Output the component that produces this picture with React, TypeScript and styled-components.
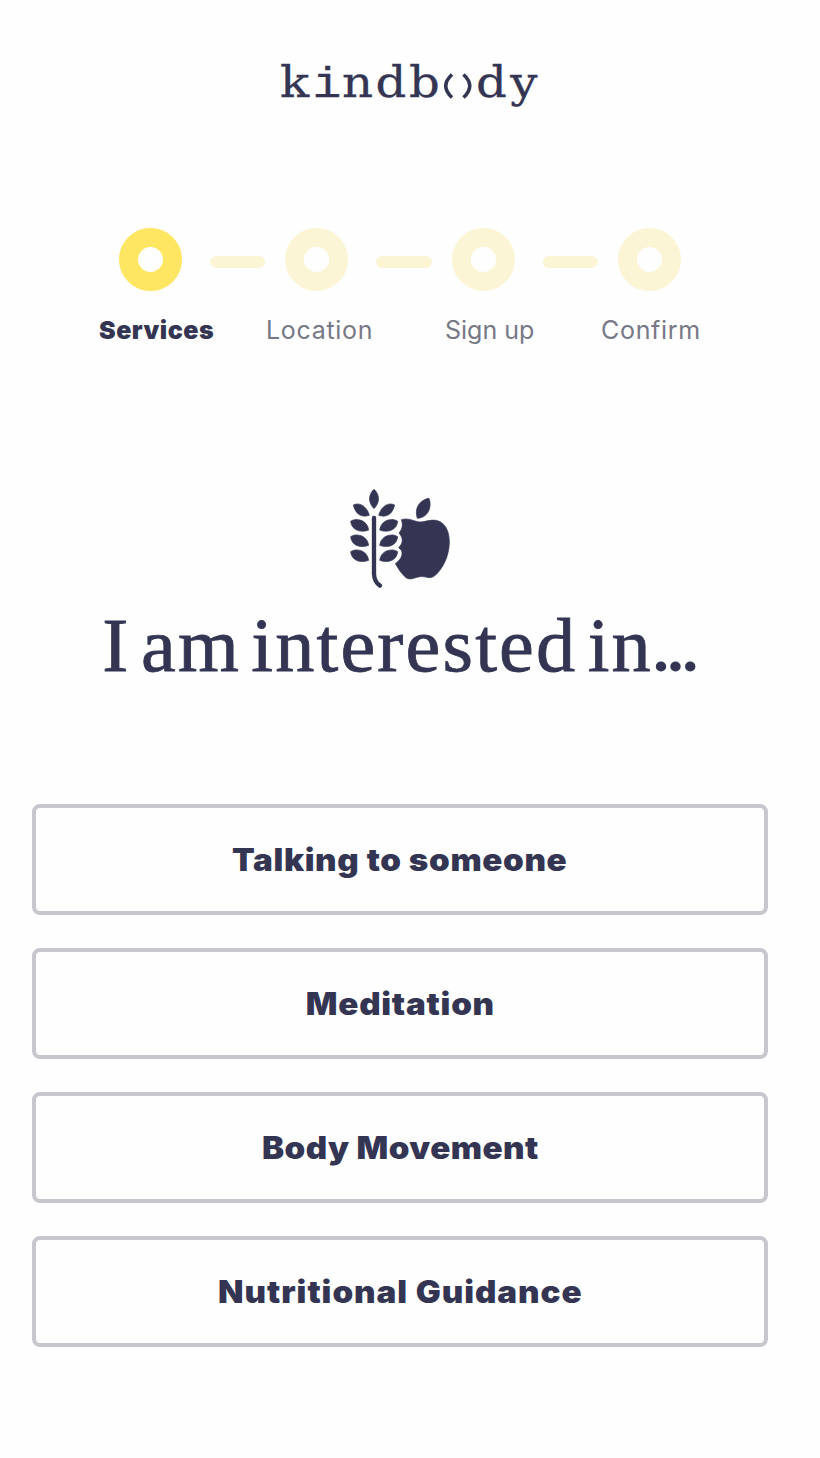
import React from "react";
import styled, { createGlobalStyle } from "styled-components";

const ink = "#333553";

const GlobalStyle = createGlobalStyle`
  * { box-sizing: border-box; }
  body { margin: 0; background: #fefefe; }
`;

const Page = styled.main`
  width: 820px;
  height: 1458px;
  overflow: hidden;
  color: ${ink};
  font-family: Inter, "Liberation Sans", sans-serif;
`;

const Header = styled.header`
  display: flex;
  height: 228px;
  padding: 50px 0 0 270px;
`;

const Content = styled.div`
  display: flex;
  flex-direction: column;
  width: 800px;
`;

const Track = styled.div`
  display: flex;
  align-items: center;
  gap: 28px;
  height: 63px;
  padding-left: 119px;
`;

const Ring = styled.span<{ $active?: boolean }>`
  flex: none;
  width: 63px;
  height: 63px;
  border: 19.5px solid ${(p) => (p.$active ? "#ffe662" : "#fcf5d5")};
  border-radius: 50%;
`;

const Dash = styled.span`
  flex: none;
  width: 55.4px;
  height: 12px;
  margin: 5px -8px 0 0;
  border-radius: 6px;
  background: #fcf5d5;
`;

const Labels = styled.div`
  display: grid;
  grid-template-columns: 167px 179px 156px 1fr;
  padding: 23px 0 0 99px;
  height: 198px;
`;

const Label = styled.span<{ $active?: boolean; $track: number }>`
  font-size: 25px;
  line-height: 32px;
  white-space: nowrap;
  font-weight: ${(p) => (p.$active ? 900 : 400)};
  color: ${(p) => (p.$active ? ink : "#777886")};
  letter-spacing: ${(p) => p.$track}px;
`;

const Hero = styled.section`
  display: flex;
  flex-direction: column;
  align-items: center;
  height: 315px;
  & > svg { margin-top: -9px; flex: none; }
`;

const Title = styled.h1`
  margin: 5px 0 0;
  font: 400 76px/90px "Liberation Serif", serif;
  letter-spacing: 2.1px;
  word-spacing: -11px;
  white-space: nowrap;
  transform: scaleX(1.03);
  -webkit-text-stroke: 0.8px ${ink};
`;

const Dots = styled.span`
  font-size: 62px;
  font-weight: 700;
  letter-spacing: -1.3px;
  -webkit-text-stroke: 0;
`;

const Options = styled.div`
  display: flex;
  flex-direction: column;
  gap: 33px;
  padding: 0 32px;
`;

const Option = styled.button`
  height: 111px;
  border: 4px solid #c6c6cf;
  border-radius: 8px;
  background: transparent;
  color: ${ink};
  font: 900 31px/40px Inter, "Liberation Sans", sans-serif;
`;

const OptionText = styled.span<{ $track: number }>`
  display: inline-block;
  letter-spacing: ${(p) => p.$track}px;
  transform: scaleX(1.07);
`;

const Logo = () => (
  <svg width="280" height="70" viewBox="0 0 280 70" fill={ink} fontFamily='"DejaVu Serif", serif' fontSize="43">
    <g transform="scale(1.12 1)" stroke={ink} strokeWidth="0.3">
      <text y="47.500" x="8.900 38 64.300 94.200 124.100">k<tspan fontFamily='"Liberation Mono", monospace'>i</tspan>ndb</text>
      <text y="47.500" x="183.900 214.400">dy</text>
    </g>
    <path d="M182 24.500Q169.500 36 182 47.500M193.500 24.500Q206 36 193.500 47.500" fill="none" stroke={ink} strokeWidth="3.600" />
  </svg>
);

const Harvest = () => (
  <svg width="120" height="115" viewBox="0 0 360 345" fill={ink} stroke={ink} strokeWidth="2" strokeLinejoin="round">
    <path d="M102 28C84 44 84 68 102 86C120 68 120 44 102 28Z" />
    <path d="M40 75C56 66 80 76 88 106C64 114 46 102 40 75Z" />
    <path d="M164 75C148 66 124 76 116 106C140 114 158 102 164 75Z" />
    <path d="M32 124C46 113 82 118 86 150C62 160 34 150 32 124Z" />
    <path d="M32 170C46 159 82 164 86 196C62 206 34 196 32 170Z" />
    <path d="M32 215C46 204 82 209 86 241C62 251 34 241 32 215Z" />
    <path d="M173 124C159 113 123 118 119 150C143 160 171 150 173 124Z" />
    <path d="M173 170C159 159 123 164 119 196C143 206 171 196 173 170Z" />
    <path d="M173 215C159 204 123 209 119 241C143 251 171 241 173 215Z" />
    <path d="M102 114V282Q103 306 120 317" fill="none" strokeWidth="13" strokeLinecap="round" />
    <path d="M264 55C238 62 222 86 232 115C260 114 277 87 268 57Q267 54 264 55Z" />
    <path d="M184 119C208 112 222 125 241 126C260 125 273 117 293 122C318 130 329 157 328 191C326 230 309 265 286 286C270 300 259 288 241 290C222 292 213 302 198 293C184 281 175 266 166 251C182 239 190 226 184 211L176 203C188 190 192 177 177 159C188 145 189 134 184 119Z" />
  </svg>
);

const steps = [
  { name: "Services", track: 0.5 },
  { name: "Location", track: 0.7 },
  { name: "Sign up", track: 0 },
  { name: "Confirm", track: 0.7 },
];

const options = [
  { name: "Talking to someone", track: 0.6 },
  { name: "Meditation", track: 0.7 },
  { name: "Body Movement", track: 0.4 },
  { name: "Nutritional Guidance", track: 0.9 },
];

export default function App() {
  return (
    <Page>
      <GlobalStyle />
      <Header><Logo /></Header>
      <Content>
        <Track>
          {steps.map((s, i) => (
            <React.Fragment key={s.name}>
              {i > 0 && <Dash />}
              <Ring $active={i === 0} />
            </React.Fragment>
          ))}
        </Track>
        <Labels>
          {steps.map((s, i) => (
            <Label key={s.name} $active={i === 0} $track={s.track}>{s.name}</Label>
          ))}
        </Labels>
        <Hero>
          <Harvest />
          <Title>I am interested in<Dots>...</Dots></Title>
        </Hero>
        <Options>
          {options.map((o) => (
            <Option key={o.name}><OptionText $track={o.track}>{o.name}</OptionText></Option>
          ))}
        </Options>
      </Content>
    </Page>
  );
}
